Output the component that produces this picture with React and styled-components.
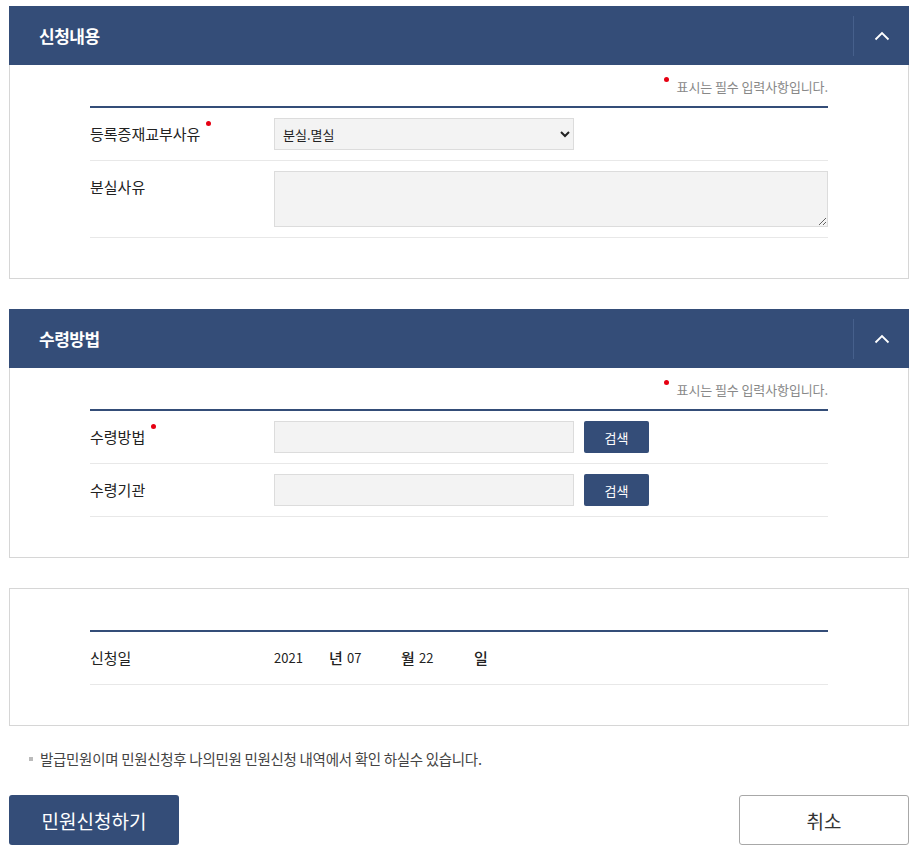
import React from "react";
import styled, { createGlobalStyle } from "styled-components";

const GlobalStyle = createGlobalStyle`
  body {
    margin: 0;
    background: #fff;
    font-family: "Noto Sans CJK KR", "Noto Sans", sans-serif;
    color: #222;
  }
  * { box-sizing: border-box; }
`;

const Page = styled("div")`
  width: 923px;
  padding: 6px 14px 0 9px;
`;

const Section = styled("section")`
  margin-bottom: 30px;
`;

const Header = styled("div")`
  height: 59px;
  background: #344d78;
  display: flex;
  align-items: center;
  justify-content: space-between;
`;

const Title = styled("h2")`
  margin: 0 0 0 30px;
  font-size: 17px;
  font-weight: 700;
  color: #fff;
  letter-spacing: -0.5px;
`;

const Toggle = styled("button")`
  width: 56px;
  height: 40px;
  border: 0;
  border-left: 1px solid #46608c;
  background: transparent;
  display: flex;
  align-items: center;
  justify-content: center;
  padding: 0;
`;

const Body = styled("div")`
  border: 1px solid #d6d6d6;
  border-top: ${(p) => (p.$open ? "1px solid #d6d6d6" : "0")};
  padding: 0 80px 40px;
`;

const Note = styled("div")`
  height: 41px;
  display: flex;
  align-items: center;
  justify-content: flex-end;
  font-size: 13px;
  letter-spacing: -0.1px;
  color: #888;
  padding-top: 2px;
`;

const Dot = styled("span")`
  display: inline-block;
  width: 5px;
  height: 5px;
  border-radius: 50%;
  background: #e60012;
  position: relative;
  top: ${(p) => p.$top || 0}px;
  margin: ${(p) => p.$margin || "0"};
`;

const Spacer = styled("div")`
  height: 41px;
`;

const Table = styled("div")`
  border-top: 2px solid #344d78;
`;

const Row = styled("div")`
  display: flex;
  align-items: flex-start;
  padding: 10px 0;
  border-bottom: 1px solid #e8e8e8;
`;

const Label = styled("div")`
  width: 184px;
  flex-shrink: 0;
  line-height: 32px;
  font-size: 15px;
  color: #222;
  display: flex;
  align-items: flex-start;
`;

const Field = styled("div")`
  flex: 1;
  display: flex;
  align-items: center;
  gap: 10px;
`;

const Select = styled("select")`
  width: 300px;
  height: 32px;
  background: #f3f3f3;
  border: 1px solid #dcdcdc;
  font-family: inherit;
  font-size: 13px;
  color: #222;
  padding: 0 4px;
`;

const TextArea = styled("textarea")`
  width: 100%;
  height: 56px;
  background: #f3f3f3;
  border: 1px solid #dcdcdc;
  display: block;
  font-family: inherit;
`;

const Input = styled("input")`
  width: 300px;
  height: 32px;
  background: #f3f3f3;
  border: 1px solid #dcdcdc;
  font-family: inherit;
`;

const SearchButton = styled("button")`
  width: 65px;
  height: 32px;
  background: #344d78;
  color: #fff;
  border: 0;
  border-radius: 2px;
  font-family: inherit;
  font-size: 13px;
`;

const DateField = styled("div")`
  display: flex;
  align-items: center;
`;

const DateValue = styled("span")`
  display: inline-block;
  width: ${(p) => p.$width}px;
  font-size: 13px;
  color: #222;
  line-height: 32px;
`;

const DateUnit = styled("span")`
  display: inline-block;
  width: 18px;
  font-size: 15px;
  font-weight: 500;
  color: #222;
  line-height: 32px;
`;

const Notice = styled("p")`
  margin: -7px 0 26px;
  padding-left: 20px;
  font-size: 14.5px;
  line-height: 20px;
  letter-spacing: -0.3px;
  color: #444;
  display: flex;
  align-items: center;
`;

const Square = styled("span")`
  width: 4px;
  height: 4px;
  background: #bbb;
  margin-right: 7px;
`;

const Actions = styled("div")`
  display: flex;
  justify-content: space-between;
`;

const ActionButton = styled("button")`
  width: 170px;
  height: 50px;
  border-radius: 3px;
  font-family: inherit;
  font-size: 19px;
  background: ${(p) => (p.$primary ? "#344d78" : "#fff")};
  color: ${(p) => (p.$primary ? "#fff" : "#333")};
  border: ${(p) => (p.$primary ? "0" : "1px solid #a8a8a8")};
`;

const ChevronUp = () => (
  <svg width="16" height="10" viewBox="0 0 16 10">
    <path d="M1.5 8.5 L8 2 L14.5 8.5" stroke="#fff" strokeWidth="1.8" fill="none" />
  </svg>
);

const RequiredNote = () => (
  <Note>
    <Dot $top={-7} $margin="0 8px 0 0" />
    표시는 필수 입력사항입니다.
  </Note>
);

const App = () => {
  return (
    <Page>
      <GlobalStyle />
      <Section>
        <Header>
          <Title>신청내용</Title>
          <Toggle>
            <ChevronUp />
          </Toggle>
        </Header>
        <Body>
          <RequiredNote />
          <Table>
            <Row>
              <Label>
                등록증재교부사유
                <Dot $top={3} $margin="0 0 0 6px" />
              </Label>
              <Field>
                <Select defaultValue="lost">
                  <option value="lost">분실.멸실</option>
                </Select>
              </Field>
            </Row>
            <Row>
              <Label>분실사유</Label>
              <Field>
                <TextArea />
              </Field>
            </Row>
          </Table>
        </Body>
      </Section>

      <Section>
        <Header>
          <Title>수령방법</Title>
          <Toggle>
            <ChevronUp />
          </Toggle>
        </Header>
        <Body>
          <RequiredNote />
          <Table>
            <Row>
              <Label>
                수령방법
                <Dot $top={3} $margin="0 0 0 6px" />
              </Label>
              <Field>
                <Input readOnly />
                <SearchButton>검색</SearchButton>
              </Field>
            </Row>
            <Row>
              <Label>수령기관</Label>
              <Field>
                <Input readOnly />
                <SearchButton>검색</SearchButton>
              </Field>
            </Row>
          </Table>
        </Body>
      </Section>

      <Section>
        <Body $open>
          <Spacer />
          <Table>
            <Row>
              <Label>신청일</Label>
              <DateField>
                <DateValue $width={55}>2021</DateValue>
                <DateUnit>년</DateUnit>
                <DateValue $width={54}>07</DateValue>
                <DateUnit>월</DateUnit>
                <DateValue $width={55}>22</DateValue>
                <DateUnit>일</DateUnit>
              </DateField>
            </Row>
          </Table>
        </Body>
      </Section>

      <Notice>
        <Square />
        발급민원이며 민원신청후 나의민원 민원신청 내역에서 확인 하실수 있습니다.
      </Notice>

      <Actions>
        <ActionButton $primary>민원신청하기</ActionButton>
        <ActionButton>취소</ActionButton>
      </Actions>
    </Page>
  );
};

export default App;
